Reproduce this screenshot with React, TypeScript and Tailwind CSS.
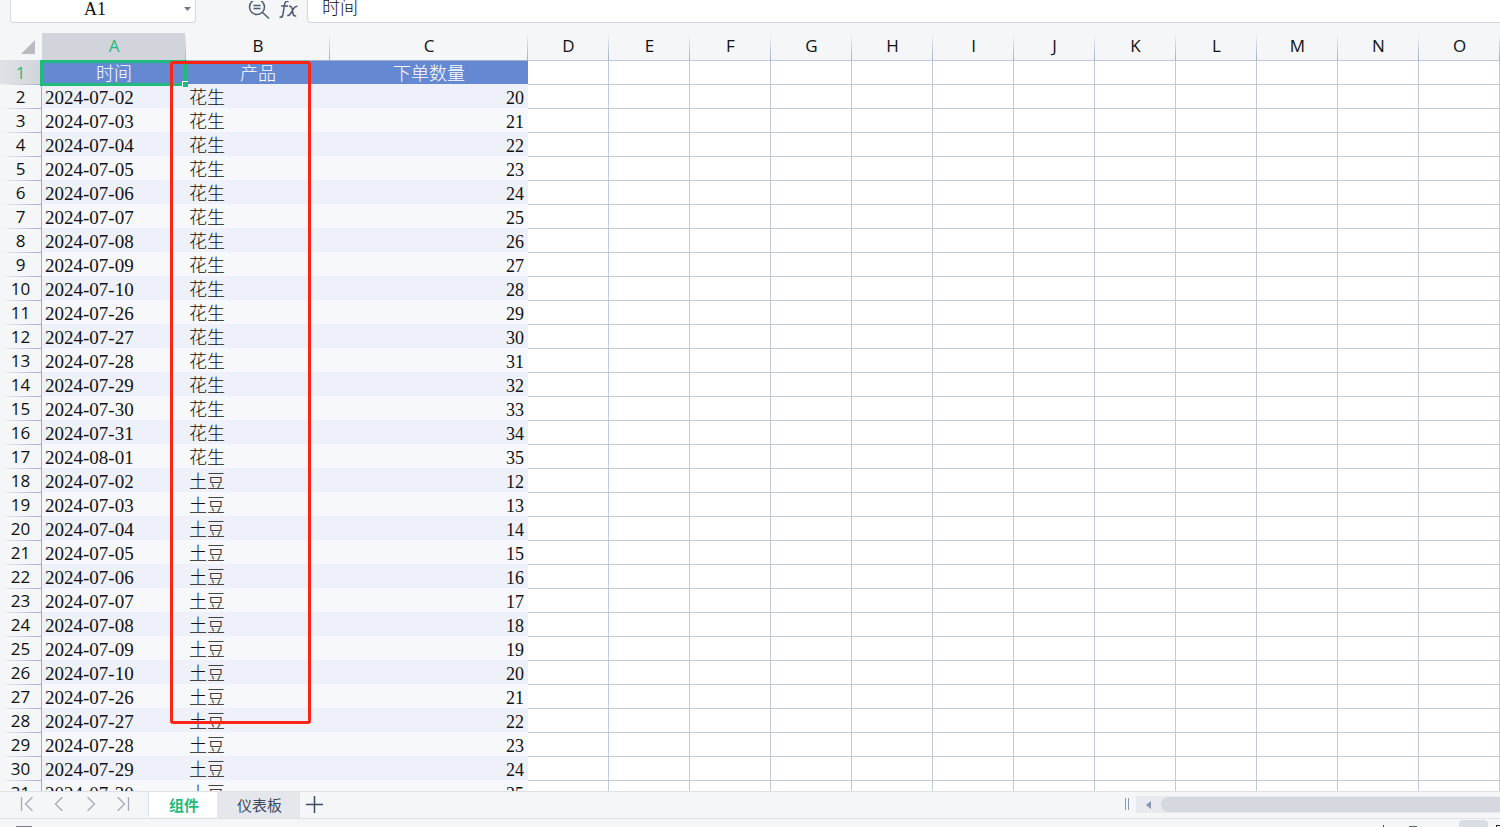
const COLUMNS = ["A", "B", "C", "D", "E", "F", "G", "H", "I", "J", "K", "L", "M", "N", "O"]

const DATES = [
  "2024-07-02", "2024-07-03", "2024-07-04", "2024-07-05", "2024-07-06",
  "2024-07-07", "2024-07-08", "2024-07-09", "2024-07-10", "2024-07-26",
  "2024-07-27", "2024-07-28", "2024-07-29", "2024-07-30", "2024-07-31",
  "2024-08-01",
]

const ORDERS = [
  ...DATES.map((date, i) => ({ date, product: "花生", count: 20 + i })),
  ...DATES.slice(0, 14).map((date, i) => ({ date, product: "土豆", count: 12 + i })),
]

const EMPTY_COLUMNS = COLUMNS.slice(3)

function FormulaBar() {
  return (
    <div className="flex h-[33px] shrink-0 items-start">
      <div className="ml-[10px] flex h-[23px] w-[186px] items-center rounded-b-sm border border-t-0 border-[#d5d8de] bg-white">
        <input
          aria-label="名称框"
          defaultValue="A1"
          className="h-[20px] w-[168px] min-w-0 pb-1 text-center text-lg leading-5 outline-none"
        />
        <button aria-label="选择名称" className="mb-1 flex h-4 w-4 items-center justify-center">
          <svg width="7" height="4" viewBox="0 0 7 4" fill="#6d7b8d">
            <path d="M0 0h7L3.500 4z" />
          </svg>
        </button>
      </div>
      <button aria-label="查找" className="ml-[52px] h-[22px] w-[22px]">
        <svg width="22" height="20" viewBox="0 0 22 20" fill="none" stroke="#4c5a70" strokeWidth="1.500">
          <circle cx="9" cy="6" r="7.500" />
          <path d="M5.500 4.500h7M5.500 7.500h7M14.500 11.500l6.500 6" />
        </svg>
      </button>
      <button aria-label="插入函数" className="ml-2 h-[22px] w-[22px]">
        <svg width="22" height="20" viewBox="0 0 22 20" fill="none" stroke="#4c5a70" strokeWidth="1.500">
          <path d="M10.500 0.500C8 -0.300 7 1 6.600 3.500L4.800 14c-.4 2-1.300 2.600-3.300 2.200M3 5h7" />
          <path d="M11 5.500c2-.6 2.700.4 3.200 2.500l.8 4.500c.4 2.200 1.300 2.800 3.300 2.200M19.500 5.300c-1.800-.3-2.700.5-3.900 2.200l-2.600 4.500c-1.200 2-2 3-3.800 2.500" />
        </svg>
      </button>
      <input
        aria-label="编辑栏"
        defaultValue="时间"
        className="ml-[7px] h-[23px] min-w-0 flex-1 rounded-bl-sm border border-t-0 border-r-0 border-[#d5d8de] bg-white px-[14px] pb-[11px] text-lg leading-5 font-light outline-none"
      />
    </div>
  )
}

function ColumnHeader({ name }: { name: string }) {
  const selected = name === "A"
  return (
    <th
      scope="col"
      className={`bg-[linear-gradient(to_bottom,#f5f6f8,#a3adc6)] bg-[length:1px_100%] bg-right bg-no-repeat p-0 pb-[2px] font-['Open_Sans'] text-[17px] leading-6 font-normal ${
        selected ? "bg-[#d1d4db] text-[#1fbb7d]" : ""
      }`}
    >
      {name}
    </th>
  )
}

function RowHeader({ row }: { row: number }) {
  return (
    <th
      scope="row"
      className={`border-r border-[#a3adc6] p-0 pt-[2px] font-['Open_Sans'] text-[17px] leading-[22px] font-normal ${
        row === 1
          ? "bg-[linear-gradient(to_right,#e0e2e7,#d1d4db)] text-[#1fbb7d]"
          : "bg-[#f5f6f8] bg-[linear-gradient(to_right,#f5f6f8,#a3adc6)] bg-[length:100%_1px] bg-top bg-no-repeat"
      }`}
    >
      {row}
    </th>
  )
}

function EmptyCells() {
  return EMPTY_COLUMNS.map((name) => (
    <td key={name} className="border-t border-r border-[#c3c9dc] bg-white p-0" />
  ))
}

function Sheet() {
  return (
    <main className="relative min-h-0 flex-1 overflow-hidden">
      <table className="w-full table-fixed border-separate border-spacing-0 text-lg leading-5">
        <colgroup>
          <col className="w-[42px]" />
          <col className="w-[144px]" />
          <col className="w-[144px]" />
          <col className="w-[198px]" />
          {EMPTY_COLUMNS.map((name) => (
            <col key={name} />
          ))}
        </colgroup>
        <thead>
          <tr className="h-[27px]">
            <td className="p-0">
              <svg className="ml-[21px]" width="14" height="14" viewBox="0 0 14 14" fill="#b9bbbe">
                <path d="M14 0v14H0z" />
              </svg>
            </td>
            {COLUMNS.map((name) => (
              <ColumnHeader key={name} name={name} />
            ))}
          </tr>
        </thead>
        <tbody>
          <tr className="h-6 text-center text-white">
            <RowHeader row={1} />
            <td className="relative border-t border-[#a3adc6] bg-[#6489d2] p-0 pt-[3px] font-light">
              时间
              <div className="absolute -top-px -right-px -bottom-[2px] -left-[2px] border-[3px] border-[#1fbb7d]">
                <span className="absolute -right-1 -bottom-1 h-[6px] w-[6px] border-t border-l border-white bg-[#1fbb7d]" />
              </div>
            </td>
            <td className="border-t border-[#a3adc6] bg-[#6489d2] p-0 pt-[3px] font-light">产品</td>
            <td className="border-t border-[#a3adc6] bg-[#6489d2] p-0 pt-[3px] font-light">下单数量</td>
            <EmptyCells />
          </tr>
          {ORDERS.map((order, i) => (
            <tr key={i} className={`h-6 ${i % 2 === 0 ? "bg-[#eef1fa]" : "bg-[#f7f8fc]"}`}>
              <RowHeader row={i + 2} />
              <td className="p-0 pt-1 pl-[3px] text-[19px]">{order.date}</td>
              <td className="p-0 pt-1 pl-[3px] font-light">{order.product}</td>
              <td className="p-0 pt-1 pr-1 text-right">{order.count}</td>
              <EmptyCells />
            </tr>
          ))}
        </tbody>
      </table>
      <div className="pointer-events-none absolute top-7 left-[170px] h-[663px] w-[141px] rounded-[3px] border-[3px] border-[#fc2415]" />
    </main>
  )
}

function SheetTabs() {
  return (
    <footer className="shrink-0">
      <div className="flex h-7 items-start border-y border-[#dfe1e7] font-['Noto_Sans_CJK_SC',sans-serif] text-[15px]">
        <div className="flex h-6 w-[148px] shrink-0 items-center gap-[18px] pl-5">
          {[
            ["第一张", "M1 0v14M12 0L5 7l7 7"],
            ["上一张", "M10 0L3 7l7 7"],
            ["下一张", "M3 0l7 7-7 7"],
            ["最后一张", "M1 0l7 7-7 7M12 0v14"],
          ].map(([label, path]) => (
            <button key={label} aria-label={label}>
              <svg width="14" height="14" viewBox="0 0 13 14" fill="none" stroke="#a5aab3" strokeWidth="1.300">
                <path d={path} />
              </svg>
            </button>
          ))}
        </div>
        <button className="h-[25px] w-[69px] border-l border-[#dfe1e7] bg-white pl-[2px] font-bold leading-[25px] text-[#1fbb7d]">
          组件
        </button>
        <button className="h-[26px] w-[83px] bg-[#e6e7ec] pl-[2px] leading-[26px] text-[#3e4a60]">仪表板</button>
        <button aria-label="新建工作表" className="ml-[6px] mt-1">
          <svg width="17" height="17" viewBox="0 0 17 17" stroke="#3e4a60" strokeWidth="1.500">
            <path d="M8.500 0v17M0 8.500h17" />
          </svg>
        </button>
        <div className="ml-auto mt-[6px] mr-[7px] h-3 w-1 border-x border-[#8797b0]" />
        <div className="mt-1 flex h-[17px] w-[364px] items-center bg-[#e8eaef]">
          <button aria-label="向左滚动" className="flex w-[25px] shrink-0 justify-center">
            <svg width="5" height="8" viewBox="0 0 5 8" fill="#8797b0">
              <path d="M5 0v8L0 4z" />
            </svg>
          </button>
          <div className="h-[15px] flex-1 rounded-l-full bg-[#d5d8df]" />
        </div>
      </div>
      <div className="flex h-2 items-end overflow-hidden">
        <div className="ml-4 h-px w-4 bg-[#79808c]" />
        <div className="ml-auto h-[2px] w-px bg-[#3e4a60]" />
        <div className="ml-[25px] h-px w-2 bg-[#5d6577]" />
        <div className="ml-[42px] h-[7px] w-[29px] rounded-t-sm bg-[#d8dee4]" />
        <div className="ml-2 h-[2px] w-1 border-t border-l border-[#222b3c]" />
      </div>
    </footer>
  )
}

export default function App() {
  return (
    <div className="flex h-screen flex-col overflow-hidden bg-[#f5f6f8] font-['Liberation_Serif','Noto_Sans_CJK_SC',serif] text-[#111]">
      <FormulaBar />
      <Sheet />
      <SheetTabs />
    </div>
  )
}
